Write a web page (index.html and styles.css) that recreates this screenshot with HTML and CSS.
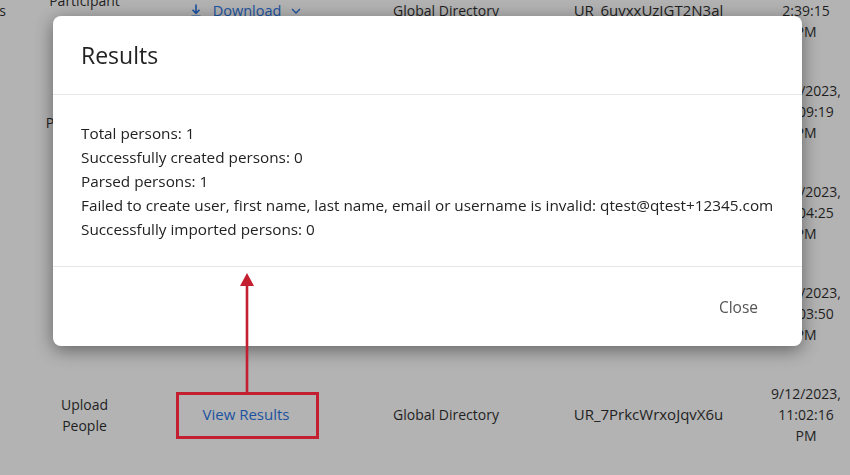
FILE: index.html
```html
<!DOCTYPE html>
<html lang="en">
<head>
<meta charset="utf-8">
<title>Results</title>
<link rel="stylesheet" href="styles.css">
</head>
<body>
<div class="page">
  <div class="table">
    <div class="row">
      <div class="cell cell-lead">Failures</div>
      <div class="cell">Participant Import</div>
      <div class="cell">
        <span class="link">
          <svg class="dl-icon" width="10" height="13" viewBox="0 0 10 13"><path d="M5 0.5V9M1.5 5.8L5 9.3L8.5 5.8M0.5 12.2H9.5" fill="none" stroke="currentColor" stroke-width="1.6"/></svg>
          Download
          <svg class="chev" width="10" height="6" viewBox="0 0 10 6"><path d="M1 1L5 5L9 1" fill="none" stroke="currentColor" stroke-width="1.3"/></svg>
        </span>
      </div>
      <div class="cell">Global Directory</div>
      <div class="cell cell-code">UR_6uvxxUzIGT2N3al</div>
      <div class="cell"><span class="stamp">9/11/2023, 2:39:15 PM</span></div>
    </div>
    <div class="row">
      <div class="cell cell-lead"></div>
      <div class="cell">Import Participants</div>
      <div class="cell"></div>
      <div class="cell"></div>
      <div class="cell"></div>
      <div class="cell"><span class="stamp">9/12/2023, 10:09:19 PM</span></div>
    </div>
    <div class="row">
      <div class="cell cell-lead"></div>
      <div class="cell">Upload People</div>
      <div class="cell"></div>
      <div class="cell"></div>
      <div class="cell"></div>
      <div class="cell"><span class="stamp">9/12/2023, 10:04:25 PM</span></div>
    </div>
    <div class="row">
      <div class="cell cell-lead"></div>
      <div class="cell">Upload People</div>
      <div class="cell"></div>
      <div class="cell"></div>
      <div class="cell"></div>
      <div class="cell"><span class="stamp">9/12/2023, 10:03:50 PM</span></div>
    </div>
    <div class="row">
      <div class="cell cell-lead"></div>
      <div class="cell">Upload People</div>
      <div class="cell"><span class="link link-lg">View Results</span></div>
      <div class="cell">Global Directory</div>
      <div class="cell cell-code">UR_7PrkcWrxoJqvX6u</div>
      <div class="cell"><span class="stamp">9/12/2023, 11:02:16 PM</span></div>
    </div>
  </div>
</div>

<div class="modal" role="dialog" aria-labelledby="modal-title">
  <div class="modal-header"><h2 id="modal-title" class="modal-title">Results</h2></div>
  <div class="modal-body">
    <div>Total persons: 1</div>
    <div>Successfully created persons: 0</div>
    <div>Parsed persons: 1</div>
    <div>Failed to create user, first name, last name, email or username is invalid: qtest@qtest+12345.com</div>
    <div>Successfully imported persons: 0</div>
  </div>
  <div class="modal-footer"><button class="btn-close" type="button">Close</button></div>
</div>

<div class="annot-arrow">
  <svg width="16" height="120" viewBox="0 0 16 120"><path d="M8 10V120" stroke="#c41f30" stroke-width="2.6"/><path d="M1 13L8 0L15 13Z" fill="#c41f30"/></svg>
</div>
<div class="annot-box"></div>
</body>
</html>
```
FILE: styles.css
```css
* { box-sizing: border-box; }
html, body { margin: 0; padding: 0; }
body {
  width: 850px;
  height: 475px;
  overflow: hidden;
  background: #b3b3b3;
  font-family: "Open Sans", "Noto Sans", sans-serif;
  color: #1f1f1f;
}
.page { width: 850px; height: 475px; overflow: hidden; }
.table {
  margin-left: -66px;
  margin-top: -40px;
  display: grid;
  grid-auto-rows: 101px;
}
.row {
  display: grid;
  grid-template-columns: 100px 101px 222px 178px 227px 88px;
}
.cell {
  display: flex;
  align-items: center;
  justify-content: center;
  text-align: center;
  font-size: 14px;
  line-height: 21px;
  padding: 0 6px;
}
.cell-lead { justify-content: flex-end; padding-right: 28px; }
.cell-code { font-size: 15px; }
.stamp { width: min-content; }
.link {
  color: #1b52a0;
  display: inline-flex;
  align-items: center;
  font-size: 14.5px;
}
.link-lg { font-size: 15px; }
.dl-icon { margin-right: 12px; }
.chev { margin-left: 10px; }

.modal {
  position: fixed;
  left: 53px;
  top: 16px;
  width: 749px;
  height: 330px;
  background: #fff;
  border-radius: 8px;
  box-shadow: 0 4px 18px rgba(0,0,0,0.45);
  display: flex;
  flex-direction: column;
  color: #222;
}
.modal-header {
  height: 79px;
  padding: 0 28px;
  display: flex;
  align-items: center;
  border-bottom: 1px solid #e6e6e6;
}
.modal-title {
  margin: 0;
  font-size: 23px;
  font-weight: 400;
}
.modal-body {
  padding: 26px 28px 25px;
  font-size: 15.3px;
  line-height: 24px;
  border-bottom: 1px solid #e6e6e6;
}
.modal-footer {
  flex: 1;
  display: flex;
  align-items: center;
  justify-content: flex-end;
  padding: 0 28px;
}
.btn-close {
  background: none;
  border: none;
  font-family: inherit;
  font-size: 15.5px;
  color: #555;
  padding: 8px 16px;
}
.annot-arrow {
  position: absolute;
  left: 239px;
  top: 273px;
  width: 16px;
  height: 120px;
}
.annot-arrow svg { display: block; }
.annot-box {
  position: absolute;
  left: 176px;
  top: 392px;
  width: 143px;
  height: 47px;
  border: 3px solid #c41f30;
}
```
